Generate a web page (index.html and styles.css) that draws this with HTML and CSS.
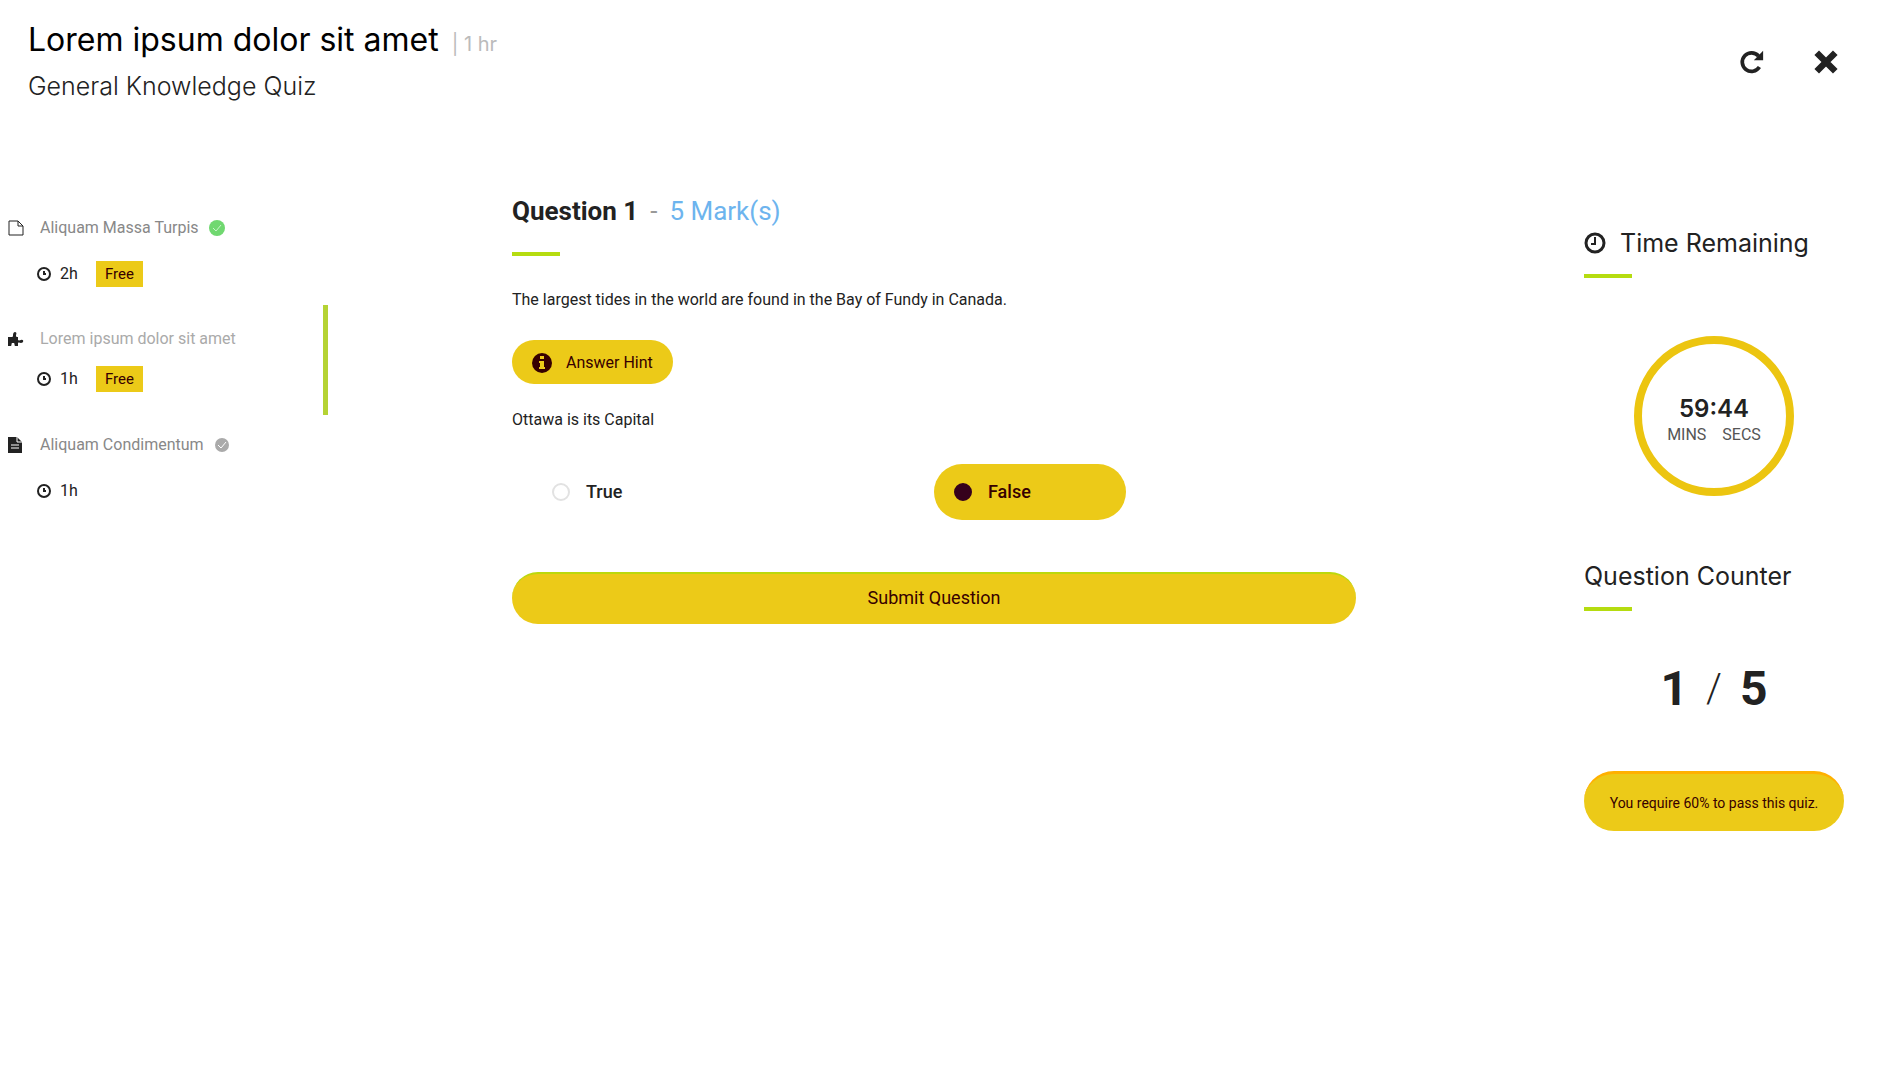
FILE: index.html
```html
<!DOCTYPE html>
<html lang="en">
<head>
<meta charset="utf-8">
<meta name="viewport" content="width=device-width, initial-scale=1">
<title>General Knowledge Quiz</title>
<link rel="stylesheet" href="styles.css">
</head>
<body>
<header class="header">
  <div>
    <h1 class="course">Lorem ipsum dolor sit amet <span class="course-time">| 1 hr</span></h1>
    <p class="unit-title">General Knowledge Quiz</p>
  </div>
  <div class="actions">
    <button class="icon-button" type="button" aria-label="Reload">
      <svg width="28" height="28" viewBox="0 0 28 28" fill="none" stroke="currentColor" stroke-width="4"><path d="M22 19.500A10 10 0 1 1 21 7.500"/><path d="M26 2v10H16z" fill="currentColor" stroke="none"/></svg>
    </button>
    <button class="icon-button" type="button" aria-label="Close">
      <svg width="28" height="28" viewBox="0 0 28 28" stroke="currentColor" stroke-width="7"><path d="M4 4l20 20M24 4L4 24"/></svg>
    </button>
  </div>
</header>

<div class="layout">
  <nav class="sidebar" aria-label="Course units">
    <ul class="units">
      <li class="unit">
        <a class="unit-link" href="#unit-1">
          <svg class="unit-icon" width="16" height="16" viewBox="0 0 16 16" fill="none" stroke="currentColor" stroke-width="1"><path d="M1 1h9l5 5v9H1zM10 1v5h5"/></svg>
          <span>Aliquam Massa Turpis</span>
          <svg class="status done" width="16" height="16" viewBox="0 0 16 16"><circle cx="8" cy="8" r="8" fill="currentColor"/><path d="M4 8l3 3 5-6" fill="none" stroke="#c9f5c9" stroke-width="1"/></svg>
        </a>
        <div class="meta"><svg width="14" height="14" viewBox="0 0 14 14" fill="none" stroke="currentColor" stroke-width="2"><circle cx="7" cy="7" r="6"/><path d="M7 4v3h2"/></svg><span class="duration">2h</span><span class="tag">Free</span></div>
      </li>
      <li class="unit current">
        <a class="unit-link" href="#unit-2">
          <svg class="unit-icon" width="16" height="16" viewBox="0 0 16 16" fill="currentColor"><path d="M0 6h4c1 0 1-1 1-2 0-2 1-3 2-3s2 1 1 3c0 1 0 2 1 2h1v3c1 1 2 0 3 0 3-1 3 3 0 3-1 0-2-1-3 0v3H7c-1-1 0-2-1-3H4c-1 1 0 2-1 3H0z"/></svg>
          <span>Lorem ipsum dolor sit amet</span>
        </a>
        <div class="meta"><svg width="14" height="14" viewBox="0 0 14 14" fill="none" stroke="currentColor" stroke-width="2"><circle cx="7" cy="7" r="6"/><path d="M7 4v3h2"/></svg><span class="duration">1h</span><span class="tag">Free</span></div>
      </li>
      <li class="unit">
        <a class="unit-link" href="#unit-3">
          <svg class="unit-icon" width="16" height="16" viewBox="0 0 16 16"><path d="M0 0h9l5 5v11H0z" fill="currentColor"/><path d="M9 0v5h5M3 8h8M3 11h8" fill="none" stroke="#fff" stroke-width="1"/></svg>
          <span>Aliquam Condimentum</span>
          <svg class="status" width="16" height="16" viewBox="0 0 16 16"><circle cx="8" cy="8" r="7" fill="currentColor"/><path d="M4 8l3 3 5-6" fill="none" stroke="#fff" stroke-width="1"/></svg>
        </a>
        <div class="meta"><svg width="14" height="14" viewBox="0 0 14 14" fill="none" stroke="currentColor" stroke-width="2"><circle cx="7" cy="7" r="6"/><path d="M7 4v3h2"/></svg><span class="duration">1h</span></div>
      </li>
    </ul>
  </nav>

  <main class="question">
    <h2 class="question-title">Question 1 <span class="dash">-</span> <span class="marks">5 Mark(s)</span></h2>
    <p class="statement">The largest tides in the world are found in the Bay of Fundy in Canada.</p>
    <button class="hint-button" type="button">
      <svg width="20" height="20" viewBox="0 0 20 20"><circle cx="10" cy="10" r="10" fill="#360000"/><path d="M8 3h4v3H8zM7 8h5v6h1v2H7v-2h1v-4H7z" fill="#ecca18"/></svg>
      Answer Hint
    </button>
    <p class="hint">Ottawa is its Capital</p>
    <form>
      <div class="options">
        <label class="option"><input type="radio" name="answer" value="true">True</label>
        <label class="option"><input type="radio" name="answer" value="false" checked>False</label>
      </div>
      <button class="submit" type="button">Submit Question</button>
    </form>
  </main>

  <aside class="panel">
    <h3 class="panel-title">
      <svg width="22" height="22" viewBox="0 0 22 22" fill="none" stroke="currentColor" stroke-width="3"><circle cx="11" cy="11" r="9"/><path d="M11 5v7H7" stroke-width="2"/></svg>
      Time Remaining
    </h3>
    <div class="timer">
      <strong class="clock">59:44</strong>
      <div class="clock-labels"><span>MINS</span><span>SECS</span></div>
    </div>
    <h3 class="panel-title">Question Counter</h3>
    <p class="counter"><b>1</b><span class="slash">/</span><b>5</b></p>
    <p class="pass-note">You require 60% to pass this quiz.</p>
  </aside>
</div>
</body>
</html>
```
FILE: styles.css
```css
* { box-sizing: border-box; }

body {
  margin: 0;
  background: #fff;
  color: #222;
  font: 16px/24px Roboto, sans-serif;
}

h1, h2, h3, p, ul { margin: 0; padding: 0; }

ul { list-style: none; }

button { border: 0; font: inherit; color: inherit; cursor: pointer; }

svg { flex: none; }

.header {
  display: flex;
  justify-content: space-between;
  height: 192px;
  padding: 20px 52px 0 28px;
}

.course {
  font: 400 32px/40px Inter, sans-serif;
  color: #000;
}

.course-time {
  margin-left: 4px;
  font-size: 20px;
  color: #bbb;
}

.unit-title {
  margin-top: 6px;
  font: 300 25px/32px Inter, sans-serif;
}

.actions {
  display: flex;
  gap: 46px;
  padding-top: 29px;
}

.icon-button {
  width: 28px;
  height: 28px;
  padding: 0;
  background: none;
}

.icon-button svg { width: 26px; height: 26px; }

.layout {
  display: grid;
  grid-template-columns: 328px minmax(0, 1fr) 308px;
  align-items: start;
}

.sidebar { padding-top: 8px; }

.unit {
  height: 105px;
  padding: 16px 0 0 8px;
  border-right: 5px solid transparent;
}

.unit.current {
  height: 110px;
  padding-top: 22px;
  margin-bottom: 2px;
  border-color: #b5d334;
}

.unit-link {
  display: flex;
  align-items: center;
  gap: 16px;
  height: 24px;
  color: #222;
  text-decoration: none;
}

.unit-link span { color: #888; }

.current .unit-link span { color: #aaa; }

.status { margin-left: -6px; color: #aaa; }

.status.done { color: #70d870; }

.meta {
  display: flex;
  align-items: center;
  height: 28px;
  margin-top: 20px;
  padding-left: 29px;
}

.current .meta { margin-top: 14px; }

.duration { width: 36px; margin-left: 9px; }

.tag {
  padding: 1px 9px;
  background: #ecca18;
  color: #360000;
  font-size: 15px;
}

.question { padding: 0 228px 0 184px; }

.question-title,
.panel-title {
  display: flex;
  align-items: center;
  position: relative;
}

.question-title {
  height: 64px;
  padding-bottom: 26px;
  font-size: 26px;
  line-height: 38px;
}

.question-title::after,
.panel-title::after {
  content: "";
  position: absolute;
  left: 0;
  bottom: 0;
  width: 48px;
  height: 4px;
  background: #b5dc10;
}

.dash { margin: 0 12px; font-weight: 400; color: #999; }

.marks { font-weight: 400; color: #6db4ee; }

.statement { margin-top: 32px; }

.hint-button {
  display: flex;
  align-items: center;
  gap: 14px;
  height: 44px;
  margin-top: 28px;
  padding: 2px 20px 0;
  border-radius: 22px;
  background: #ecca18;
  color: #360000;
}

.hint { margin-top: 24px; }

.options {
  display: grid;
  grid-template-columns: 1fr 1fr;
  margin-top: 32px;
}

.option {
  display: flex;
  align-items: center;
  justify-self: start;
  width: 192px;
  height: 56px;
  padding-left: 20px;
  border-radius: 28px;
  font-size: 18px;
  font-weight: 500;
}

.option:first-child { margin-left: 20px; }

.option:has(input:checked) { background: #ecca18; color: #360000; }

.option input {
  appearance: none;
  width: 18px;
  height: 18px;
  margin: 0 16px 0 0;
  border: 2px solid #e2e2e2;
  border-radius: 50%;
}

.option input:checked { border-color: #36001c; background: #36001c; }

.submit {
  display: block;
  width: 100%;
  height: 52px;
  margin-top: 52px;
  padding: 0 0 2px;
  border-top: 2px solid #bcd80c;
  border-radius: 26px;
  background: #ecca18;
  color: #360000;
  font-size: 18px;
}

.panel { padding: 36px 48px 0 0; }

.panel-title {
  gap: 14px;
  height: 50px;
  padding-bottom: 20px;
  font: 400 25px/30px Inter, sans-serif;
  white-space: nowrap;
}

.timer {
  display: flex;
  flex-direction: column;
  align-items: center;
  justify-content: center;
  width: 160px;
  height: 160px;
  margin: 58px auto 65px;
  padding-top: 10px;
  border: 8px solid #ecc510;
  border-radius: 50%;
}

.clock { font: 600 24px/28px Inter, sans-serif; }

.clock-labels {
  display: flex;
  gap: 16px;
  font-size: 16px;
  color: #555;
}

.counter {
  display: flex;
  align-items: center;
  justify-content: center;
  gap: 18px;
  margin-top: 50px;
  font-size: 48px;
  line-height: 56px;
}

.slash { font-size: 40px; font-weight: 300; }

.pass-note {
  height: 60px;
  margin-top: 54px;
  border-top: 3px solid #ffb000;
  border-radius: 30px;
  background: #ecca18;
  color: #360000;
  font-size: 14px;
  line-height: 58px;
  text-align: center;
  white-space: nowrap;
}
```
